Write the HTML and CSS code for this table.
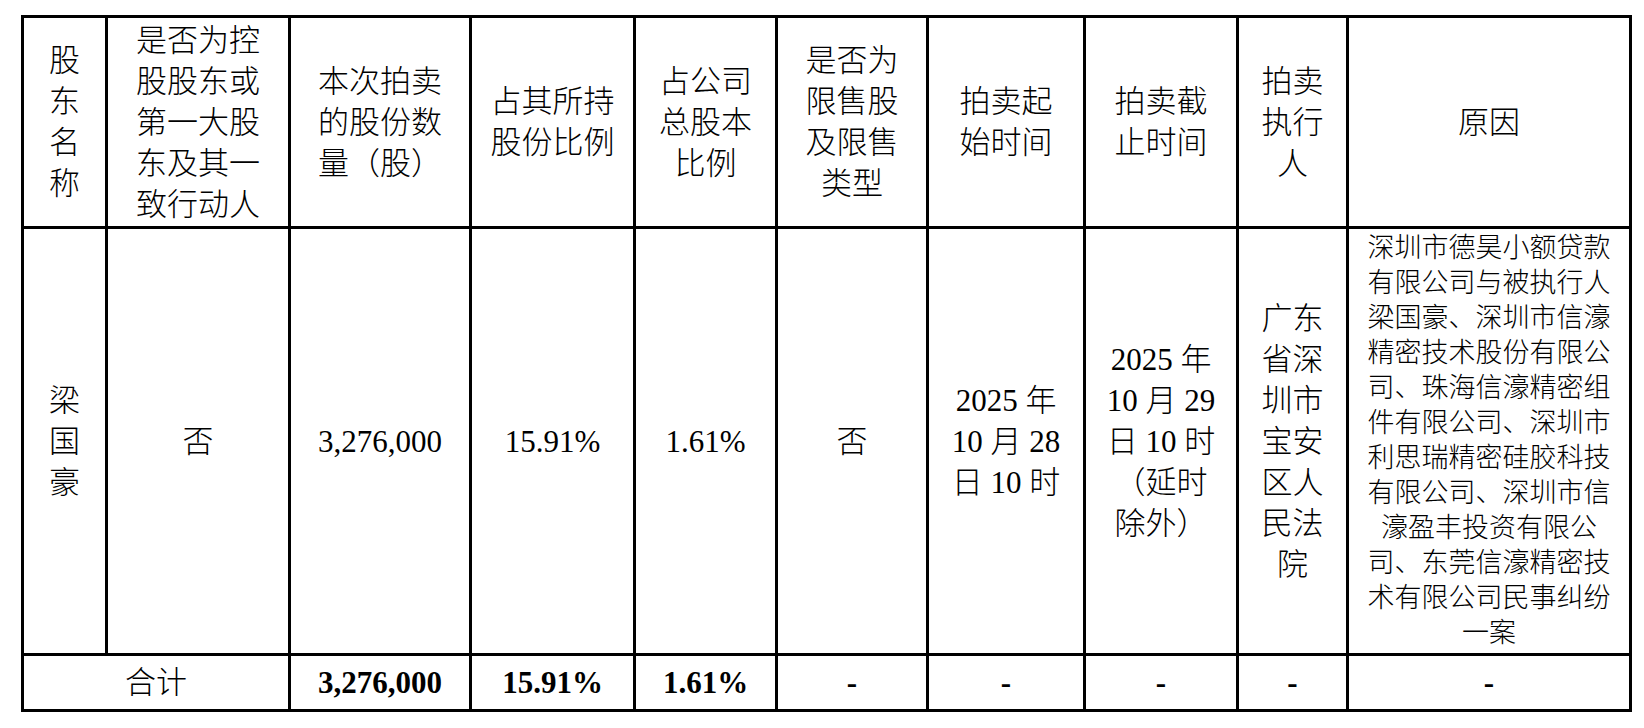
FILE: index.html
```html
<!DOCTYPE html>
<html lang="zh-CN">
<head>
<meta charset="utf-8">
<title>股份拍卖情况</title>
<link rel="stylesheet" href="styles.css">
</head>
<body>
<div class="page">
<table class="t">
  <colgroup>
    <col class="c1"><col class="c2"><col class="c3"><col class="c4"><col class="c5">
    <col class="c6"><col class="c7"><col class="c8"><col class="c9"><col class="c10">
  </colgroup>
  <tr class="head">
    <td>股<br>东<br>名<br>称</td>
    <td>是否为控<br>股股东或<br>第一大股<br>东及其一<br>致行动人</td>
    <td>本次拍卖<br>的股份数<br>量（股）</td>
    <td>占其所持<br>股份比例</td>
    <td>占公司<br>总股本<br>比例</td>
    <td>是否为<br>限售股<br>及限售<br>类型</td>
    <td>拍卖起<br>始时间</td>
    <td>拍卖截<br>止时间</td>
    <td>拍卖<br>执行<br>人</td>
    <td>原因</td>
  </tr>
  <tr class="data">
    <td>梁<br>国<br>豪</td>
    <td>否</td>
    <td>3,276,000</td>
    <td>15.91%</td>
    <td>1.61%</td>
    <td>否</td>
    <td>2025 年<br>10 月 28<br>日 10 时</td>
    <td>2025 年<br>10 月 29<br>日 10 时<br>（延时<br>除外）</td>
    <td>广东<br>省深<br>圳市<br>宝安<br>区人<br>民法<br>院</td>
    <td class="reason">深圳市德昊小额贷款<br>有限公司与被执行人<br>梁国豪、深圳市信濠<br>精密技术股份有限公<br>司、珠海信濠精密组<br>件有限公司、深圳市<br>利思瑞精密硅胶科技<br>有限公司、深圳市信<br>濠盈丰投资有限公<br>司、东莞信濠精密技<br>术有限公司民事纠纷<br>一案</td>
  </tr>
  <tr class="total">
    <td colspan="2">合计</td>
    <td class="b">3,276,000</td>
    <td class="b">15.91%</td>
    <td class="b">1.61%</td>
    <td class="b">-</td>
    <td class="b">-</td>
    <td class="b">-</td>
    <td class="b">-</td>
    <td class="b">-</td>
  </tr>
</table>
</div>
</body>
</html>
```
FILE: styles.css
```css
html, body {
  margin: 0;
  padding: 0;
  background: #ffffff;
}

.page {
  padding: 15px 0 0 21px;
}

.t {
  border-collapse: collapse;
  table-layout: fixed;
  width: 1611px;
  border: 3px solid #000;
}

.c1 { width: 84px; }
.c2 { width: 183px; }
.c3 { width: 181px; }
.c4 { width: 164px; }
.c5 { width: 142px; }
.c6 { width: 151px; }
.c7 { width: 157px; }
.c8 { width: 153px; }
.c9 { width: 110px; }
.c10 { width: 283px; }

.t td {
  border: 3px solid #000;
  padding: 0;
  text-align: center;
  vertical-align: middle;
  font-family: "Liberation Serif", "Noto Sans CJK SC", serif;
  font-size: 31px;
  font-weight: 300;
  line-height: 41px;
  color: #000;
  white-space: nowrap;
}

.head td { height: 208px; }
.data td { height: 424px; }
.total td { height: 53px; }

.t td.reason {
  font-size: 27px;
  line-height: 35px;
}

.t td.b {
  font-weight: bold;
}
```
